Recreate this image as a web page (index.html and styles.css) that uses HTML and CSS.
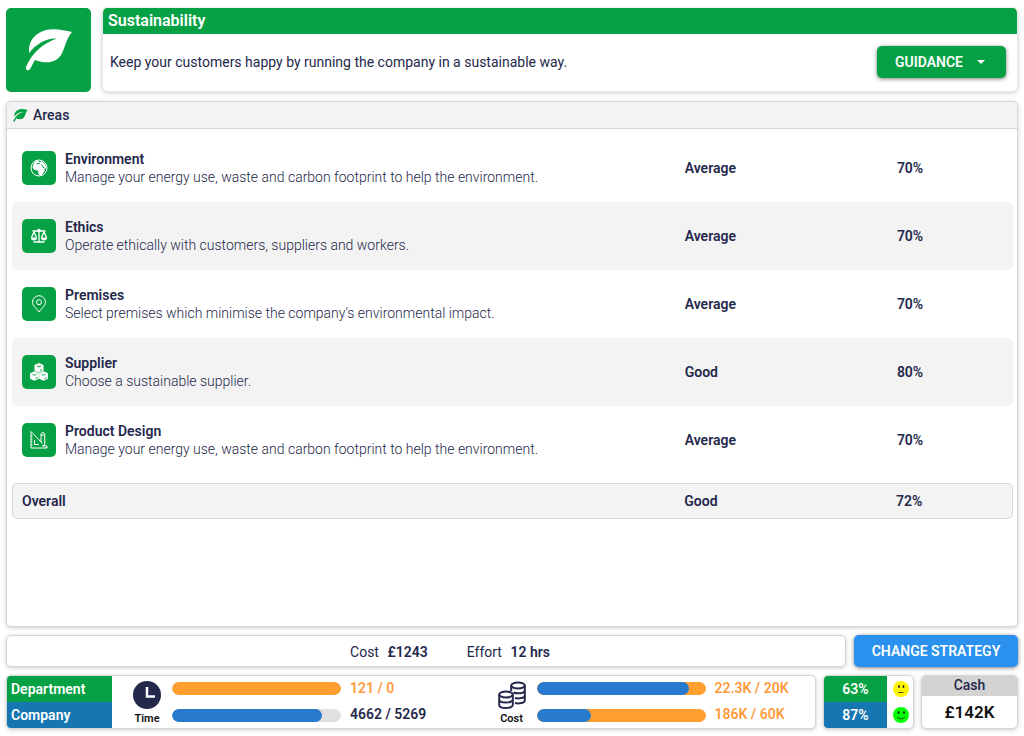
FILE: index.html
```html
<!DOCTYPE html>
<html lang="en">
<head>
<meta charset="utf-8">
<meta name="viewport" content="width=device-width, initial-scale=1">
<title>Sustainability</title>
<link rel="stylesheet" href="styles.css">
</head>
<body>
<svg class="defs" aria-hidden="true">
  <symbol id="leaf" viewBox="0 0 46 42">
    <path d="M46 3C40 10 39 19 35 26C30 34 20 35 9 31C7 34 6 37 4 40Q3 42 1 41Q-1 40 0 38C6 24 17 14 31 9.500C20 9 10 15 3 24C2 12 9 4 20 1C28-1 38 1 46 3Z"/>
  </symbol>
</svg>
<div class="page">
  <header class="top">
    <div class="top-icon"><svg class="leaf-large" aria-hidden="true"><use href="#leaf"/></svg></div>
    <section class="intro card">
      <h1 class="intro-title">Sustainability</h1>
      <div class="intro-body">
        <p class="intro-text">Keep your customers happy by running the company in a sustainable way.</p>
        <button class="button button-guidance" type="button">GUIDANCE
          <svg class="caret" viewBox="0 0 8 4" aria-hidden="true"><path d="M0 0h8L4 4z"/></svg>
        </button>
      </div>
    </section>
  </header>

  <main class="areas card">
    <h2 class="areas-title"><svg class="leaf-small" aria-hidden="true"><use href="#leaf"/></svg>Areas</h2>
    <div class="areas-body">
      <table class="table">
        <colgroup><col class="col-name"><col class="col-rating"><col></colgroup>
        <tbody>
          <tr>
            <td><div class="area">
              <span class="tile"><svg viewBox="0 0 18 18" aria-hidden="true"><circle class="line" cx="9" cy="9" r="8"/><path d="M3.500 5L5 2.500L8 1.500L9 3L12 2.500L15 5L16.500 9L14.500 9.500L14.500 12L12.500 15L10.500 17L8.500 15L8 11.500L4.500 11L2.500 8.500Z"/><path class="cut" d="M6.500 5L10 4.500M11.500 5.500L14 9"/></svg></span>
              <div><h3 class="area-name">Environment</h3><p class="area-text">Manage your energy use, waste and carbon footprint to help the environment.</p></div>
            </div></td><td>Average</td><td>70%</td>
          </tr>
          <tr>
            <td><div class="area">
              <span class="tile"><svg viewBox="0 0 18 18" aria-hidden="true"><path class="line bold" d="M9 2V15M2.500 4H15.500M3.500 15H14.500M4 5L1.500 10.500M4 5L6.500 10.500M14 5L11.500 10.500M14 5L16.500 10.500"/><path d="M.8 10.500H7.200Q7 13.500 4 13.500Q1 13.500 .8 10.500ZM10.800 10.500H17.200Q17 13.500 14 13.500Q11 13.500 10.800 10.500Z"/><circle cx="9" cy="3.500" r="1.800"/></svg></span>
              <div><h3 class="area-name">Ethics</h3><p class="area-text">Operate ethically with customers, suppliers and workers.</p></div>
            </div></td><td>Average</td><td>70%</td>
          </tr>
          <tr>
            <td><div class="area">
              <span class="tile"><svg viewBox="0 0 18 18" aria-hidden="true"><path class="line" d="M9 17C7.500 14.500 2.500 11 2.500 7.200A6.500 6.500 0 0 1 15.500 7.200C15.500 11 10.500 14.500 9 17Z"/><circle class="line" cx="9" cy="7.200" r="2.500"/></svg></span>
              <div><h3 class="area-name">Premises</h3><p class="area-text">Select premises which minimise the company's environmental impact.</p></div>
            </div></td><td>Average</td><td>70%</td>
          </tr>
          <tr>
            <td><div class="area">
              <span class="tile"><svg viewBox="0 0 18 18" aria-hidden="true"><path d="M9 0L13.500 2V7.800L9 9.800L4.500 7.800V2ZM4.500 8.200L8.900 10.200V15.800L4.500 17.800L.1 15.800V10.200ZM13.500 8.200L17.900 10.200V15.800L13.500 17.800L9.100 15.800V10.200Z"/><path class="cut" d="M7 3L9 3.800L11 3M10 7.500L12 6.500M2.500 11.300L4.500 12.200L6.500 11.300M5.500 15.500L7.500 14.500M11.500 11.300L13.500 12.200L15.500 11.300M14.500 15.500L16.500 14.500"/></svg></span>
              <div><h3 class="area-name">Supplier</h3><p class="area-text">Choose a sustainable supplier.</p></div>
            </div></td><td>Good</td><td>80%</td>
          </tr>
          <tr>
            <td><div class="area">
              <span class="tile"><svg viewBox="0 0 18 18" aria-hidden="true"><path class="line" d="M1 .5V17H17M1 .5L12.500 12.500M4.500 9V13.500H9M1 5H2.500M1 8H2.500M1 11H2.500M1 14H2.500M11 11V3L12.800 1L14.700 3V14.500H12.500M11 4H14.500M12.500 15H17V17"/></svg></span>
              <div><h3 class="area-name">Product Design</h3><p class="area-text">Manage your energy use, waste and carbon footprint to help the environment.</p></div>
            </div></td><td>Average</td><td>70%</td>
          </tr>
        </tbody>
      </table>
      <table class="table table-overall">
        <colgroup><col class="col-name"><col class="col-rating"><col></colgroup>
        <tbody><tr><th scope="row">Overall</th><td>Good</td><td>72%</td></tr></tbody>
      </table>
    </div>
  </main>

  <div class="actions">
    <div class="summary card">
      <span>Cost <strong>£1243</strong></span>
      <span>Effort <strong>12 hrs</strong></span>
    </div>
    <button class="button button-change" type="button">CHANGE STRATEGY</button>
  </div>

  <footer class="status">
    <section class="usage card">
      <div class="scopes"><span class="scope department">Department</span><span class="scope company">Company</span></div>
      <div class="meters">
        <div class="meter">
          <div class="meter-label"><svg class="meter-icon" viewBox="0 0 28 28" aria-hidden="true"><circle class="ink" cx="14" cy="14" r="14"/><path class="hand" d="M14 6V15.500H22"/></svg>Time</div>
          <div class="bars">
            <div class="bar"><div class="fill over" style="width:100%"></div></div>
            <div class="bar"><div class="fill" style="width:89%"></div></div>
          </div>
          <div class="values"><span class="warn">121 / 0</span><span>4662 / 5269</span></div>
        </div>
        <div class="meter">
          <div class="meter-label"><svg class="meter-icon coins" viewBox="0 0 28 28" aria-hidden="true"><ellipse cx="20" cy="4.500" rx="6.800" ry="3"/><path d="M13.200 4.500V10M26.800 4.500V19.500C26.800 22 21 23 17 22M26.800 9.500C26.800 12.500 19 13 15.500 11.500M26.800 14.500C26.800 17 21 18 17 17"/><ellipse cx="8" cy="13.500" rx="6.800" ry="3"/><path d="M1.200 13.500V24C1.200 28 14.800 28 14.800 24V13.500M1.200 18.500C1.200 22.500 14.800 22.500 14.800 18.500"/></svg>Cost</div>
          <div class="bars">
            <div class="bar excess"><div class="fill" style="width:90%"></div></div>
            <div class="bar excess"><div class="fill" style="width:32%"></div></div>
          </div>
          <div class="values"><span class="warn">22.3K / 20K</span><span class="warn">186K / 60K</span></div>
        </div>
      </div>
    </section>
    <section class="mood card">
      <div class="scores"><span class="score department">63%</span><span class="score company">87%</span></div>
      <div class="faces">
        <svg class="face" viewBox="0 0 16 16" aria-hidden="true"><circle class="neutral" cx="8" cy="8" r="8"/><ellipse cx="6" cy="5.500" rx=".9" ry="1.500"/><ellipse cx="10.500" cy="5.500" rx=".9" ry="1.500"/><path d="M5.500 11.500H10.500"/></svg>
        <svg class="face" viewBox="0 0 16 16" aria-hidden="true"><circle class="happy" cx="8" cy="8" r="8"/><ellipse cx="5.500" cy="5.500" rx=".9" ry="1.500"/><ellipse cx="11" cy="5.500" rx=".9" ry="1.500"/><path d="M4 10.500Q8 13.500 12 10.500"/></svg>
      </div>
    </section>
    <section class="cash card">
      <h2 class="cash-title">Cash</h2>
      <p class="cash-value">£142K</p>
    </section>
  </footer>
</div>
</body>
</html>
```
FILE: styles.css
```css
* { box-sizing: border-box; }
body {
  margin: 0;
  background: #fff;
  color: #24284b;
  font: 500 14px/18px Roboto, "Liberation Sans", sans-serif;
}
h1, h2, h3, p { margin: 0; font: inherit; }
.defs { position: absolute; width: 0; height: 0; }
.page {
  display: flex;
  flex-direction: column;
  gap: 8px;
  min-height: 100vh;
  padding: 8px 6px 7px 6px;
}
.card {
  overflow: hidden;
  border: 1px solid #d6d6d6;
  border-radius: 5px;
  background: #fff;
  box-shadow: 0 1px 4px rgba(0, 0, 0, .2);
}

/* Header */
.top { display: flex; gap: 11px; height: 84px; margin-bottom: 1px; }
.top-icon {
  display: flex;
  flex: none;
  align-items: center;
  justify-content: center;
  width: 85px;
  border-radius: 5px;
  background: #06a144;
}
.leaf-large { width: 46px; height: 42px; fill: #fff; }
.intro { display: flex; flex: 1; flex-direction: column; border-color: #e8e8e8; border-top: 0; }
.intro-title {
  height: 26px;
  padding-left: 5px;
  background: #06a144;
  color: #fff;
  font-size: 16px;
  font-weight: 600;
  line-height: 26px;
}
.intro-body {
  display: flex;
  flex: 1;
  align-items: center;
  justify-content: space-between;
  padding: 0 11px 2px 7px;
}
.intro-text { font-weight: 400; }
.button {
  height: 32px;
  border: 0;
  border-radius: 5px;
  color: #fff;
  font: inherit;
  font-weight: 600;
  box-shadow: 0 1px 4px rgba(0, 0, 0, .5);
}
.button-guidance {
  display: flex;
  align-items: center;
  gap: 14px;
  padding: 0 21px 0 18px;
  background: #06a144;
}
.caret { width: 8px; height: 4px; fill: #fff; }

/* Areas */
.areas { flex: 1; }
.areas-title {
  display: flex;
  align-items: center;
  gap: 5px;
  height: 27px;
  padding-left: 6px;
  border-bottom: 1px solid #d6d6d6;
  background: #f3f3f3;
}
.leaf-small { width: 15px; height: 13px; fill: #06a144; }
.areas-body { padding: 5px 4px 6px 5px; }
.table { width: 100%; border-spacing: 0; table-layout: fixed; font-weight: 600; }
.col-name { width: 67.2%; }
.col-rating { width: 21.2%; }
.table td { height: 68px; padding: 0; }
.table tr:nth-child(even) td { background: #f3f3f3; }
.table td:first-child { border-radius: 5px 0 0 5px; }
.table td:last-child { border-radius: 0 5px 5px 0; }
.area { display: flex; align-items: center; gap: 9px; padding-left: 10px; }
.tile {
  display: flex;
  align-items: center;
  justify-content: center;
  width: 34px;
  height: 34px;
  border-radius: 5px;
  background: #06a144;
}
.tile svg { width: 18px; height: 18px; fill: #fff; }
.tile .line { fill: none; stroke: #fff; stroke-width: 1; }
.tile .bold { stroke-width: 1.3; }
.tile .cut { fill: none; stroke: #06a144; stroke-width: 1; }
.area-text { font-weight: 350; }
.table-overall {
  margin-top: 9px;
  border: 1px solid #d6d6d6;
  border-radius: 5px;
  background: #f3f3f3;
}
.table-overall td, .table-overall th { height: 34px; padding: 0; text-align: left; font-weight: 600; }
.table-overall th { padding-left: 9px; }

/* Strategy actions */
.actions { display: flex; gap: 8px; }
.summary {
  display: flex;
  flex: 1;
  align-items: center;
  justify-content: center;
  gap: 39px;
  padding: 2px 0 0 48px;
  font-weight: 400;
}
.summary strong { margin-left: 5px; font-weight: 600; }
.button-change { width: 164px; padding-bottom: 2px; background: #2a92ee; }

/* Status bar */
.status { display: flex; gap: 7px; height: 54px; }
.usage { display: flex; flex: 1; }
.scopes { display: flex; flex-direction: column; width: 105px; }
.scope, .score { flex: 1; color: #fff; font-weight: 600; line-height: 26px; }
.scope { padding-left: 4px; }
.department { background: #06a144; }
.company { background: #1676b2; }
.meters { display: grid; flex: 1; grid-template-columns: 364fr 338fr; }
.meter { display: flex; align-items: center; padding-left: 10px; }
.meter-label {
  display: flex;
  flex-direction: column;
  align-items: center;
  gap: 2px;
  width: 50px;
  padding-top: 4px;
  color: #111;
  font-size: 11px;
  font-weight: 600;
  line-height: 16px;
}
.meter-icon { width: 28px; height: 28px; }
.ink { fill: #24284b; }
.hand { fill: none; stroke: #fff; stroke-width: 2.5; }
.coins { fill: none; stroke: #24284b; stroke-width: 2; }
.bars { display: flex; flex: 1; flex-direction: column; gap: 14px; max-width: 169px; }
.bar { height: 13px; overflow: hidden; border-radius: 7px; background: #e0e0e0; }
.fill { height: 100%; border-radius: 7px; background: #277ace; }
.over, .excess { background: #ff9f2f; }
.values { display: flex; flex-direction: column; gap: 8px; margin-left: 9px; padding-bottom: 2px; font-weight: 600; white-space: nowrap; }
.warn { color: #ff9a3c; }
.mood { display: flex; width: 91px; }
.scores { display: flex; flex-direction: column; width: 63px; text-align: center; }
.faces { display: flex; flex: 1; flex-direction: column; align-items: center; justify-content: center; gap: 10px; padding-left: 2px; }
.face { width: 16px; height: 16px; fill: #222; }
.face path { fill: none; stroke: #222; stroke-width: .8; }
.face .neutral { fill: #fff500; }
.face .happy { fill: #0f0; }
.cash { width: 97px; text-align: center; }
.cash-title { height: 20px; background: #d3d3d3; line-height: 19px; }
.cash-value { color: #111; font-size: 17px; font-weight: 600; line-height: 32px; }
```
